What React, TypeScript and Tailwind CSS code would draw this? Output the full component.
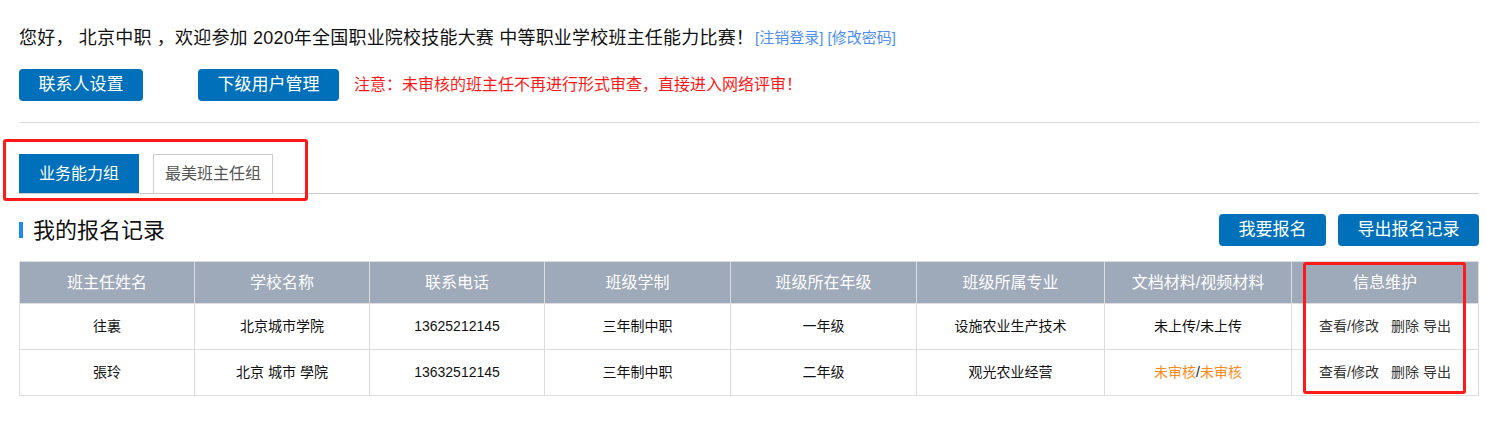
const headers = [
  { label: "班主任姓名", w: "w-[175px]" },
  { label: "学校名称", w: "w-[175px]" },
  { label: "联系电话", w: "w-[175px]" },
  { label: "班级学制", w: "w-[186px]" },
  { label: "班级所在年级", w: "w-[186px]" },
  { label: "班级所属专业", w: "w-[188px]" },
  { label: "文档材料/视频材料", w: "w-[187px]" },
  { label: "信息维护", w: "" },
];

const rows = [
  {
    name: "往裏",
    school: "北京城市学院",
    phone: "13625212145",
    system: "三年制中职",
    grade: "一年级",
    major: "设施农业生产技术",
    status: "未上传/未上传",
    pending: false,
  },
  {
    name: "張玲",
    school: "北京 城市 學院",
    phone: "13632512145",
    system: "三年制中职",
    grade: "二年级",
    major: "观光农业经营",
    status: "",
    pending: true,
  },
];

export default function App() {
  return (
    <div
      className="relative min-h-screen bg-white text-[#222]"
      style={{ fontFamily: '"Liberation Sans", "Noto Sans CJK SC", sans-serif' }}
    >
      <div className="ml-[19px] w-[1460px] pt-[26px]">
        {/* 欢迎 */}
        <div className="flex items-center h-6 text-[#111]">
          <span className="text-[18px] tracking-[0.2px]">
            您好， 北京中职 ，欢迎参加 2020年全国职业院校技能大赛 中等职业学校班主任能力比赛！
          </span>
          <span className="ml-[1px] text-[15px] text-[#4d8ef0]">[注销登录] [修改密码]</span>
        </div>

        {/* 操作按钮 */}
        <div className="mt-[19px] flex items-center h-8">
          <button className="h-8 w-[124px] rounded bg-[#0070ba] text-white text-[17px]">联系人设置</button>
          <button className="ml-[55px] h-8 w-[141px] rounded bg-[#0070ba] text-white text-[17px]">下级用户管理</button>
          <span className="ml-[15px] text-[16px] text-[#ff1a1a]">注意：未审核的班主任不再进行形式审查，直接进入网络评审！</span>
        </div>

        <div className="mt-[21px] border-t border-[#dddddd]" />

        {/* 分组标签 */}
        <div className="mt-[31px] flex items-end border-b border-[#cccccc] h-[40px]">
          <div className="h-[39px] w-[120px] flex items-center justify-center bg-[#0070ba] text-white text-[16px]">
            业务能力组
          </div>
          <div className="ml-[14px] h-[39px] w-[120px] flex items-center justify-center border border-b-0 border-[#cccccc] text-[#555] text-[16px]">
            最美班主任组
          </div>
        </div>

        {/* 报名记录标题 */}
        <div className="mt-[20px] flex items-center justify-between h-8">
          <div className="flex items-center">
            <span className="w-[4px] h-[16px] bg-[#1a8cf0]" />
            <span className="ml-[10px] text-[22px] text-[#111]">我的报名记录</span>
          </div>
          <div className="flex gap-[12px]">
            <button className="h-8 w-[107px] rounded bg-[#0070ba] text-white text-[17px]">我要报名</button>
            <button className="h-8 w-[141px] rounded bg-[#0070ba] text-white text-[17px]">导出报名记录</button>
          </div>
        </div>

        {/* 表格 */}
        <table className="mt-[15px] w-full border-collapse table-fixed">
          <thead>
            <tr className="h-[42px] bg-[#9ea9b9]">
              {headers.map((h) => (
                <th key={h.label} className={`${h.w} border border-[#dddddd] text-white text-[16px] font-normal`}>
                  {h.label}
                </th>
              ))}
            </tr>
          </thead>
          <tbody>
            {rows.map((r) => (
              <tr key={r.name} className="h-[46px] text-[14px] text-[#111] text-center">
                <td className="border border-[#dddddd]">{r.name}</td>
                <td className="border border-[#dddddd]">{r.school}</td>
                <td className="border border-[#dddddd]">{r.phone}</td>
                <td className="border border-[#dddddd]">{r.system}</td>
                <td className="border border-[#dddddd]">{r.grade}</td>
                <td className="border border-[#dddddd]">{r.major}</td>
                <td className="border border-[#dddddd]">
                  {r.pending ? (
                    <span>
                      <span className="text-[#ff8c1a]">未审核</span>/<span className="text-[#ff8c1a]">未审核</span>
                    </span>
                  ) : (
                    r.status
                  )}
                </td>
                <td className="border border-[#dddddd] text-[#333]">
                  查看/修改<span className="ml-[12px]">删除</span>
                  <span className="ml-[4px]">导出</span>
                </td>
              </tr>
            ))}
          </tbody>
        </table>
      </div>

      {/* 截图中的红色标注框 */}
      <div className="absolute left-[3px] top-[139px] w-[305px] h-[62px] border-[3px] border-[#ff1a1a] rounded-[3px]" />
      <div className="absolute left-[1303px] top-[262px] w-[163px] h-[132px] border-[3px] border-[#ff1a1a] rounded-[3px]" />
    </div>
  );
}
